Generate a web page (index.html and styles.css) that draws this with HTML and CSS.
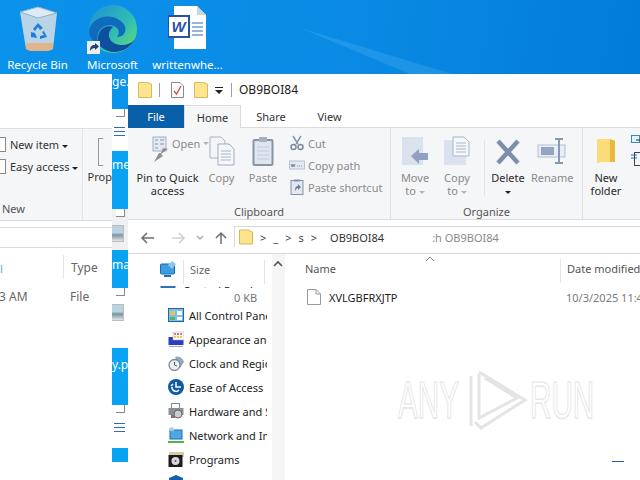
FILE: index.html
```html
<!DOCTYPE html>
<html lang="en">
<head>
  <meta charset="UTF-8" />
  <title>OB9BOI84</title>
  <link rel="stylesheet" href="styles.css">
</head>
<body>
  <div class="desktop">
    <svg class="ray" width="640" height="74" viewBox="0 0 640 74"><polygon points="300,28 320,34 452,74 410,74" fill="#3aa5ee" opacity="0.45"/></svg>

    <div class="desk-icons">
      <div class="desk-icon">
        <svg width="44" height="46" viewBox="0 0 44 46">
          <path d="M4 7 L22 2 L41 8 L37 44 Q22 50 10 44 Z" fill="#b9d4e6"/>
          <path d="M4 7 L22 2 L41 8 L22 13 Z" fill="#dcebf4" stroke="#8fb4cc"/>
          <path d="M10 38 L37 38 L37 44 Q22 50 10 44 Z" fill="#e2b48c"/>
          <path d="M17 24 l5 -6 l5 5 l-3 2 l-2 -3 l-3 4 Z M28 26 l3 6 l-7 2 v-3 l4 -1 l-2 -3 Z M15 27 l4 1 l2 5 l-6 -1 Z" fill="#1f7fd6"/>
        </svg>
        <span>Recycle Bin</span>
      </div>
      <div class="desk-icon">
        <svg width="52" height="50" viewBox="0 0 52 50">
          <defs>
            <linearGradient id="edgeTop" x1="0" y1="0" x2="1" y2="1"><stop offset="0" stop-color="#1b8fd8"/><stop offset="0.6" stop-color="#33bfb0"/><stop offset="1" stop-color="#6ce06a"/></linearGradient>
          </defs>
          <circle cx="26" cy="24" r="24" fill="url(#edgeTop)"/>
          <path d="M2 26 C4 12 24 6 36 18 C41 24 38 32 30 32 C36 24 26 18 18 21 C10 24 8 34 14 42 C7 38 2 33 2 26 Z" fill="#0f6cbd"/>
          <path d="M14 42 C6 30 16 18 26 22 C18 28 22 40 34 40 C40 40 45 38 48 34 C42 46 26 52 14 42 Z" fill="#0c4f9e"/>
          <rect x="0" y="36" width="13" height="13" fill="#e9eef2"/>
          <path d="M3 46 C3 41 5 40 8 40 V38 L12 41.500 L8 45 V43 C6 43 4 44 3 46 Z" fill="#1d3f6a"/>
        </svg>
        <span>Microsoft</span>
      </div>
      <div class="desk-icon">
        <svg width="40" height="46" viewBox="0 0 40 46">
          <path d="M6 1 H29 L38 10 V44 H6 Z" fill="#fff"/>
          <path d="M29 1 L38 10 H29 Z" fill="#c8d4e0"/>
          <path d="M24 18 H35 M24 22 H35 M24 26 H35 M24 30 H35" stroke="#2b6cc0"/>
          <rect x="0" y="11" width="21" height="21" fill="#fff" stroke="#2a4fa8" stroke-width="2"/>
          <text x="10.500" y="27" class="word-w">W</text>
        </svg>
        <span>writtenwhe...</span>
      </div>
    </div>

    <!-- window behind -->
    <div class="window back-win">
      <div class="back-top"></div>
      <div class="ribbon back-ribbon">
        <div class="back-new">
          <div class="small-row"><span class="stub"></span>New item <i class="caret"></i></div>
          <div class="small-row"><span class="stub"></span>Easy access <i class="caret"></i></div>
          <div class="back-label">New</div>
        </div>
        <div class="back-prop">
          <span class="prop-icon"></span>
          <span>Prop</span>
        </div>
      </div>
      <div class="back-addr"></div>
      <div class="back-head"><span class="back-teal">l</span><span class="back-type">Type</span></div>
      <div class="back-row"><span class="back-date">3 AM</span><span class="back-file">File</span></div>
    </div>

    <!-- slice of the desktop and other icons seen between the two windows -->
    <div class="strip">
      <div class="strip-blue s1">ge.</div>
      <div class="strip-white s2"><span class="fold"></span><span class="lines"></span></div>
      <div class="strip-blue s3">me</div>
      <div class="strip-white s4"><span class="fold"></span><span class="thumb"></span></div>
      <div class="strip-blue s5">man</div>
      <div class="strip-white s6"><span class="fold"></span><span class="thumb"></span></div>
      <div class="strip-blue s7">y.pr</div>
      <div class="strip-white s8"><span class="fold"></span><span class="lines"></span></div>
      <div class="strip-blue s9"></div>
    </div>

    <!-- front window -->
    <div class="window front-win">
      <div class="titlebar">
        <svg class="tb-folder" width="14" height="16" viewBox="0 0 14 16"><path d="M0.500 0.500 H9 L13.500 2 V15.500 H0.500 Z" fill="#fde48e" stroke="#d8b85a"/></svg>
        <i class="tb-sep"></i>
        <svg class="tb-check" width="13" height="16" viewBox="0 0 13 16"><path d="M0.500 0.500 H9 L12.500 4 V15.500 H0.500 Z" fill="#fff" stroke="#888"/><path d="M3 9 L5.500 12 L10 4" fill="none" stroke="#d4483a" stroke-width="1.300"/></svg>
        <svg class="tb-folder" width="14" height="16" viewBox="0 0 14 16"><path d="M0.500 0.500 H9 L13.500 2 V15.500 H0.500 Z" fill="#fde48e" stroke="#d8b85a"/></svg>
        <span class="tb-drop"></span>
        <i class="tb-sep tb-sep-end"></i>
        <span class="tb-title">OB9BOI84</span>
      </div>
      <div class="tabs">
        <div class="tab tab-file">File</div>
        <div class="tab tab-home">Home</div>
        <div class="tab tab-share">Share</div>
        <div class="tab tab-view">View</div>
      </div>
      <div class="ribbon front-ribbon">
        <div class="group group-clip">
          <div class="group-body">
            <div class="rbtn btn-pin">
              <div class="pin-top">
                <svg width="18" height="26" viewBox="0 0 18 26">
                  <rect x="1" y="1" width="13" height="14" fill="#e4e8f0" stroke="#a4aec0"/>
                  <path d="M3 4 h3 M8 4 h4 M3 8 h3 M8 8 h4 M3 12 h3" stroke="#8594ae"/>
                  <path d="M16 13 L9 18 L11 20 L2 26 L7 17 L9 17 L11 12 Z" fill="#8f8f8f"/>
                </svg>
                <span class="off open-lbl">Open</span><i class="caret off-caret"></i>
              </div>
              <div class="lbl">Pin to Quick<br>access</div>
            </div>
            <div class="rbtn btn-copy">
              <svg class="ico" width="26" height="30" viewBox="0 0 26 30">
                <path d="M1 1 H12 L16 5 V22 H1 Z" fill="#f3f5f9" stroke="#a9b4c6"/>
                <path d="M9 8 H20 L25 13 V29 H9 Z" fill="#f6f7fa" stroke="#a0acc0"/>
                <path d="M12 15 H22 M12 18 H22 M12 21 H22 M12 24 H22" stroke="#a9b6cb"/>
              </svg>
              <div class="lbl off">Copy</div>
            </div>
            <div class="rbtn btn-paste">
              <svg class="ico" width="22" height="30" viewBox="0 0 22 30">
                <rect x="1.500" y="4" width="19" height="25" rx="1" fill="#dfe5ee" stroke="#8794a8" stroke-width="2"/>
                <rect x="7" y="1" width="8" height="5" fill="#a6b0c0"/>
                <path d="M5 11 H17 M5 15 H17 M5 19 H17 M5 23 H17" stroke="#c3ccd9"/>
              </svg>
              <div class="lbl off">Paste</div>
            </div>
            <div class="small-col">
              <div class="small-item off">
                <svg width="16" height="16" viewBox="0 0 16 16"><path d="M4 1 L9 9 M12 1 L7 9" stroke="#8b97ab" stroke-width="1.500"/><circle cx="4.500" cy="12" r="2.500" fill="none" stroke="#7d8aa0" stroke-width="1.500"/><circle cx="11.500" cy="12" r="2.500" fill="none" stroke="#7d8aa0" stroke-width="1.500"/></svg>
                Cut
              </div>
              <div class="small-item off">
                <svg width="16" height="16" viewBox="0 0 16 16"><rect x="0.500" y="4" width="15" height="8" fill="#e3e8f2" stroke="#b7c1d2"/><path d="M2 7 l1 3 l1 -3 l1 3 l1 -3 M8 9 h1 M10 9 h1 M12 9 h1" stroke="#7f8ea8" fill="none"/></svg>
                Copy path
              </div>
              <div class="small-item off">
                <svg width="16" height="16" viewBox="0 0 16 16"><rect x="2" y="1.500" width="12" height="14" fill="#e3e8f0" stroke="#8491a6"/><rect x="5" y="0.500" width="6" height="2" fill="#8491a6"/><path d="M6 12 C6 8 7 7 9 7 V5 L12 8 L9 11 V9 C8 9 7 10 6 12 Z" fill="#6e7e98"/></svg>
                Paste shortcut
              </div>
            </div>
          </div>
          <div class="group-label">Clipboard</div>
        </div>
        <div class="group group-org">
          <div class="group-body">
            <div class="rbtn btn-move">
              <svg class="ico" width="28" height="30" viewBox="0 0 28 30">
                <rect x="1" y="1" width="21" height="28" fill="#dbe2ef"/>
                <path d="M10 20 L18 13 V17 H27 V24 H18 V28 Z" fill="#8fa1bf"/>
              </svg>
              <div class="lbl off">Move<br>to <i class="caret off-caret"></i></div>
            </div>
            <div class="rbtn btn-copyto">
              <svg class="ico" width="28" height="30" viewBox="0 0 28 30">
                <rect x="1" y="4" width="22" height="25" fill="#dbe2ef"/>
                <path d="M10 1 H21 L26 6 V20 H10 Z" fill="#f6f7fa" stroke="#a9b4c6"/>
                <path d="M13 7 H23 M13 10 H23 M13 13 H23 M13 16 H23" stroke="#a9b6cb"/>
              </svg>
              <div class="lbl off">Copy<br>to <i class="caret off-caret"></i></div>
            </div>
            <i class="inner-sep"></i>
            <div class="rbtn btn-delete">
              <svg class="ico" width="26" height="30" viewBox="0 0 26 30">
                <path d="M3 5 L23 27 M23 5 L3 27" stroke="#7f8fab" stroke-width="4.500"/>
              </svg>
              <div class="lbl">Delete<br><i class="caret"></i></div>
            </div>
            <div class="rbtn btn-rename">
              <svg class="ico" width="30" height="30" viewBox="0 0 30 30">
                <rect x="1" y="9" width="27" height="12" fill="#e9eef6" stroke="#b2bfd4"/>
                <rect x="4" y="11" width="13" height="8" fill="#94a5c2"/>
                <path d="M18 3 H26 M22 3 V27 M18 27 H26" stroke="#8898b4" stroke-width="2"/>
              </svg>
              <div class="lbl off">Rename</div>
            </div>
          </div>
          <div class="group-label">Organize</div>
        </div>
        <div class="group group-new">
          <div class="group-body">
            <div class="rbtn btn-folder">
              <svg class="ico" width="20" height="30" viewBox="0 0 20 30">
                <path d="M1 3 H13 L19 5 V26 H4 L1 28 Z" fill="#fbdc78"/>
                <path d="M14 3 L19 5 V26 H14 Z" fill="#e8b93e"/>
              </svg>
              <div class="lbl">New<br>folder</div>
            </div>
            <div class="new-side">
              <svg width="12" height="14" viewBox="0 0 12 14"><rect x="0.500" y="0.500" width="8" height="7" fill="#e8f1fa" stroke="#3c85c6"/><path d="M5 5 H11 V13" fill="none" stroke="#333"/></svg>
              <svg width="12" height="14" viewBox="0 0 12 14"><path d="M0 3 H6 M0 6 H6" stroke="#1c6fb8"/><rect x="3.500" y="0.500" width="8" height="13" fill="none" stroke="#444"/></svg>
            </div>
          </div>
        </div>
      </div>

      <div class="addressbar">
        <div class="nav-btns">
          <svg class="nav-back" width="16" height="14" viewBox="0 0 16 14"><path d="M14 7 H2 M7 2 L2 7 L7 12" fill="none" stroke="#6d6d6d" stroke-width="1.500"/></svg>
          <svg width="16" height="14" viewBox="0 0 16 14"><path d="M2 7 H14 M9 2 L14 7 L9 12" fill="none" stroke="#cfcfcf" stroke-width="1.500"/></svg>
          <svg width="10" height="14" viewBox="0 0 10 14"><path d="M2 5 L5 8 L8 5" fill="none" stroke="#a5a5a5" stroke-width="1.300"/></svg>
          <svg width="14" height="14" viewBox="0 0 14 14"><path d="M7 13 V2 M2 7 L7 2 L12 7" fill="none" stroke="#6d6d6d" stroke-width="1.500"/></svg>
        </div>
        <div class="addr-box">
          <svg width="14" height="16" viewBox="0 0 14 16"><path d="M0.500 1 H9 L13.500 3 V15 H0.500 Z" fill="#fde48e" stroke="#d8b85a"/></svg>
          <span class="crumb">&gt;</span><span class="crumb">_</span><span class="crumb">&gt;</span><span class="crumb">s</span><span class="crumb">&gt;</span>
          <span class="crumb-last">OB9BOI84</span>
          <span class="addr-ghost">:h OB9BOI84</span>
        </div>
      </div>

      <div class="browser">
        <div class="navpane">
          <div class="nav-head">
            <svg class="nav-monitor" width="17" height="18" viewBox="0 0 17 18"><rect x="0.500" y="4" width="14" height="10" rx="1" fill="#3d9be0" stroke="#1b6db5"/><path d="M8 5 L12 1 L16 4 L12 9 Z" fill="#8fc6ee"/><path d="M4 16 H11" stroke="#1b6db5" stroke-width="2"/></svg>
            <span class="head-sep"></span>
            <span class="size-lbl">Size</span>
            <span class="head-sep sep-end"></span>
          </div>
          <div class="nav-cut">
            <svg width="16" height="16" viewBox="0 0 16 16"><rect x="0.500" y="0" width="15" height="12" fill="#2f74b8"/></svg>
            <span>Control Panel</span>
          </div>
          <div class="nav-list">
            <div class="size-row">0 KB</div>
            <div class="nav-item">
              <svg width="16" height="16" viewBox="0 0 16 16"><rect x="0.500" y="1.500" width="15" height="13" fill="#7cc0ec" stroke="#1a66ac"/><rect x="2" y="4" width="5" height="4" fill="#e9c253"/><rect x="9" y="4" width="5" height="4" fill="#fff"/><rect x="2" y="10" width="5" height="3" fill="#62b05a"/><rect x="9" y="10" width="5" height="3" fill="#fff"/></svg>
              <span>All Control Panel Items</span>
            </div>
            <div class="nav-item">
              <svg width="16" height="16" viewBox="0 0 16 16"><rect x="0.500" y="6" width="15" height="8" fill="#2b3fc0"/><rect x="5" y="1" width="11" height="8" fill="#fff" stroke="#aaa" stroke-width="0.500"/><path d="M6 3 h2 M9 3 h2 M12 3 h2" stroke="#d64a3a" stroke-width="1.500"/><path d="M6 6 h2 M9 6 h2 M12 6 h2" stroke="#e8b53c" stroke-width="1.500"/><path d="M1 15.500 H15" stroke="#9aa8d0"/></svg>
              <span>Appearance and Personalization</span>
            </div>
            <div class="nav-item">
              <svg width="16" height="16" viewBox="0 0 16 16"><path d="M7 2 A7 7 0 0 1 16 7 L12 13 Z" fill="#8fa9bf"/><circle cx="6.500" cy="10" r="5.500" fill="#eef0f2" stroke="#7b8791" stroke-width="1.300"/><path d="M6.500 7 V10 L9 11" stroke="#555" fill="none"/></svg>
              <span>Clock and Region</span>
            </div>
            <div class="nav-item">
              <svg width="16" height="16" viewBox="0 0 16 16"><circle cx="8" cy="8" r="8" fill="#0f5aa6"/><path d="M8 3 V8 H13 M4 8 A4 4 0 0 0 11 11 M5 5 L3 7" fill="none" stroke="#fff" stroke-width="1.500"/></svg>
              <span>Ease of Access</span>
            </div>
            <div class="nav-item">
              <svg width="16" height="16" viewBox="0 0 16 16"><rect x="3.500" y="0.500" width="8" height="5" fill="#fff" stroke="#888"/><rect x="0.500" y="5" width="15" height="7" fill="#8a8f95"/><circle cx="10" cy="11" r="4" fill="#c9cdd1" stroke="#666"/><rect x="3" y="12" width="4" height="3" fill="#777"/></svg>
              <span>Hardware and Sound</span>
            </div>
            <div class="nav-item">
              <svg width="16" height="16" viewBox="0 0 16 16"><rect x="2" y="3" width="12" height="9" fill="#4fa8e4" stroke="#1b6db5"/><path d="M1 1 L5 0 L6 4 L2 4 Z" fill="#9fd0f0"/><path d="M0 15 H16" stroke="#5ab04c" stroke-width="2"/></svg>
              <span>Network and Internet</span>
            </div>
            <div class="nav-item">
              <svg width="16" height="16" viewBox="0 0 16 16"><rect x="1" y="1" width="15" height="5" fill="#d9c9a8"/><rect x="0.500" y="4" width="14" height="12" fill="#1c1c1c"/><circle cx="7.500" cy="10" r="4" fill="#d8d8d8"/><circle cx="7.500" cy="10" r="1" fill="#555"/></svg>
              <span>Programs</span>
            </div>
            <div class="nav-item">
              <svg width="16" height="16" viewBox="0 0 16 16"><path d="M8 0 L15 3 V9 C15 13 11 15 8 16 C5 15 1 13 1 9 V3 Z" fill="#1460a8"/></svg>
              <span>System and Security</span>
            </div>
          </div>
          <div class="nav-scroll"><svg width="12" height="8" viewBox="0 0 12 8"><path d="M2 6 L6 2 L10 6" fill="none" stroke="#555" stroke-width="1.600"/></svg></div>
        </div>

        <div class="files">
          <svg class="sort-caret" width="10" height="6" viewBox="0 0 10 6"><path d="M1 5 L5 1 L9 5" fill="none" stroke="#8a8a8a"/></svg>
          <div class="files-head">
            <span class="col-name">Name</span>
            <span class="head-sep"></span>
            <span class="col-date">Date modified</span>
          </div>
          <div class="file-row">
            <svg class="file-ico" width="14" height="16" viewBox="0 0 14 16"><path d="M0.500 0.500 H9 L13.500 5 V15.500 H0.500 Z" fill="#fff" stroke="#9a9a9a"/><path d="M9 0.500 V5 H13.500" fill="none" stroke="#9a9a9a"/></svg>
            <span class="col-name file-name">XVLGBFRXJTP</span>
            <span class="col-date">10/3/2025 11:43 AM</span>
          </div>
          <div class="watermark">
            <span class="wm-text">ANY</span>
            <svg width="62" height="64" viewBox="0 0 62 64">
              <path d="M4 8 L4 58 M12 6 L12 50 L50 30 L18 10 M12 4 L58 32 L14 60 L8 54" fill="none" stroke="#e4e4e4" stroke-width="3"/>
            </svg>
            <span class="wm-text">RUN</span>
          </div>
          <i class="corner-mark"></i>
        </div>
      </div>
    </div>
  </div>
</body>
</html>
```

FILE: styles.css
```css
* { box-sizing: border-box; margin: 0; padding: 0; }

html, body { width: 640px; height: 480px; overflow: hidden; }

body {
  font-family: "Noto Sans", "Open Sans", sans-serif;
  font-size: 11px;
  color: #222;
}

.desktop {
  position: relative;
  width: 640px;
  height: 480px;
  overflow: hidden;
  background: linear-gradient(100deg, #0b92ea 0%, #0a8ae4 50%, #0078d6 100%);
}

.ray { position: absolute; left: 0; top: 0; }

/* desktop icons */
.desk-icons {
  position: absolute;
  left: 0;
  top: 5px;
  display: flex;
}

.desk-icon {
  width: 75px;
  height: 68px;
  display: flex;
  flex-direction: column;
  align-items: center;
  justify-content: space-between;
  color: #fff;
  font-size: 11.500px;
  white-space: nowrap;
}
.desk-icon span { line-height: 16px; }
.desk-icon svg { display: block; }
.word-w { font: italic bold 15px "Liberation Sans", sans-serif; fill: #2a4fa8; text-anchor: middle; }

/* windows */
.window { position: absolute; background: #fff; overflow: hidden; }

.ribbon { background: #f5f6f7; border-bottom: 1px solid #d9dadb; }

.caret {
  display: inline-block;
  width: 0; height: 0;
  border-left: 3px solid transparent;
  border-right: 3px solid transparent;
  border-top: 3px solid #222;
  vertical-align: middle;
}
.off-caret { border-top-color: #b5b5b5; }
.off { color: #8a8a8a; }

/* back window */
.back-win { left: 0; top: 74px; width: 112px; height: 406px; }
.back-top { height: 55px; border-bottom: 1px solid #dcdcdc; }
.back-ribbon { height: 92px; display: flex; color: #333; }
.back-new {
  width: 88px;
  border-right: 1px solid #e2e3e4;
  padding-top: 5px;
}
.small-row { height: 22px; line-height: 22px; padding-left: 10px; position: relative; white-space: nowrap; }
.stub {
  position: absolute;
  left: -4px; top: 3px;
  width: 10px; height: 15px;
  border: 1px solid #888;
  background: #fff;
}
.back-label { margin-top: 23px; padding-left: 2px; color: #555; }
.back-prop {
  padding: 9px 0 0 5px;
  display: flex;
  flex-direction: column;
  gap: 3px;
  color: #333;
}
.prop-icon { display: block; width: 5px; height: 28px; margin-left: 10px; border: 1px solid #999; border-right: 0; }
.back-addr {
  height: 27px;
  background: linear-gradient(#dcdcdc, #dcdcdc) 0 6px / 100% 1px no-repeat;
  border-bottom: 1px solid #d9d9d9;
}
.back-head { height: 38px; position: relative; }
.back-teal { position: absolute; left: 0; top: 9px; line-height: 24px; color: #4db5c8; }
.back-type {
  position: absolute;
  left: 63px; top: 7px;
  padding-left: 7px;
  height: 24px;
  line-height: 26px;
  border-left: 1px solid #e5e5e5;
  color: #666;
  font-size: 12px;
}
.back-row { position: relative; height: 22px; line-height: 22px; color: #666; font-size: 12px; }
.back-date { position: absolute; left: -1px; }
.back-file { position: absolute; left: 70px; }

/* slice between windows */
.strip {
  position: absolute;
  left: 112px; top: 74px;
  width: 16px; height: 406px;
  background: #fff;
  overflow: hidden;
  color: #fff;
  font-size: 12px;
}
.strip > div { position: relative; overflow: hidden; white-space: nowrap; }
.strip-blue { background: #0aa2f2; }
.strip-white { background: #fff; }
.s1 { height: 35px; line-height: 16px; background: #0a94ec; }
.s2 { height: 42px; }
.s3 { height: 58px; line-height: 28px; }
.s4 { height: 41px; background: #f0f0f0; }
.s5 { height: 38px; line-height: 30px; }
.s6 { height: 60px; }
.s7 { height: 57px; line-height: 34px; }
.s8 { height: 43px; }
.s9 { height: 14px; }
.fold {
  position: absolute;
  right: 3px; top: 0;
  width: 9px; height: 8px;
  background: #fff;
  border-right: 1px solid #8a8a8a;
  border-bottom: 1px solid #8a8a8a;
}
.lines {
  position: absolute;
  left: 2px; top: 18px;
  width: 11px; height: 9px;
  border-top: 1px solid #2b6cc0;
  border-bottom: 1px solid #2b6cc0;
  background: linear-gradient(#2b6cc0, #2b6cc0) 0 3px / 100% 1px no-repeat;
}
.thumb {
  position: absolute;
  left: 0; top: 16px;
  width: 12px; height: 17px;
  background: linear-gradient(#b9d3e3 45%, #7d939a 60%, #dfe8ea);
  border: 1px solid #bcbcbc;
  border-left: 0;
}

/* front window */
.front-win { left: 128px; top: 74px; width: 512px; height: 406px; }

.titlebar {
  height: 31px;
  display: flex;
  align-items: center;
  padding-left: 10px;
}
.titlebar svg { flex: none; }
.tb-sep { width: 1px; height: 14px; background: #a0a0a0; margin: 0 11px 0 7px; }
.tb-sep-end { margin: 0 7px 0 8px; }
.tb-check { margin-right: 10px; }
.tb-drop {
  width: 8px; height: 7px;
  margin: 2px 0 0 7px;
  border-top: 1px solid #222;
  position: relative;
}
.tb-drop::after {
  content: "";
  position: absolute;
  left: 0; top: 2px;
  border-left: 4px solid transparent;
  border-right: 4px solid transparent;
  border-top: 4px solid #222;
}
.tb-title { font-size: 12px; color: #222; }

.tabs { height: 23px; display: flex; font-size: 11px; position: relative; z-index: 1; }
.tab { line-height: 23px; text-align: center; color: #333; }
.tab-file { width: 56px; background: #0a5fa9; color: #fff; }
.tab-home {
  width: 57px;
  background: #f5f6f7;
  border: 1px solid #dadbdc;
  border-bottom: 0;
}
.tab-share { width: 60px; }
.tab-view { width: 57px; }

.front-ribbon { height: 93px; display: flex; border-top: 1px solid #dadbdc; margin-top: -1px; overflow: hidden; }
.group { display: flex; flex-direction: column; flex: none; border-right: 1px solid #e0e1e2; }
.group-clip { width: 263px; }
.group-org { width: 192px; }
.group-new { width: 57px; border-right: 0; }
.group-body { flex: 1; display: flex; align-items: flex-start; }
.group-label { height: 15px; line-height: 15px; text-align: center; color: #555; }

.rbtn { text-align: center; padding-top: 8px; flex: none; }
.ico { display: block; margin: 0 auto 5px; }
.lbl { line-height: 13px; white-space: nowrap; color: #2a2a2a; }
.lbl.off { color: #8a8a8a; }

.btn-pin { width: 71px; margin-left: 4px; }
.pin-top {
  height: 35px;
  display: flex;
  align-items: flex-start;
  padding-left: 20px;
}
.pin-top svg { flex: none; margin-right: -1px; }
.open-lbl { margin: 0 3px; line-height: 16px; }
.pin-top .caret { margin-top: 6px; }
.btn-copy { width: 37px; }
.btn-paste { width: 42px; margin-left: 2px; }
.small-col { margin-left: 5px; padding-top: 7px; display: flex; flex-direction: column; gap: 6px; }
.small-item { display: flex; align-items: center; gap: 3px; height: 16px; white-space: nowrap; }

.group-org .group-body { padding-left: 3px; }
.btn-move, .btn-copyto, .btn-rename { width: 42px; }
.inner-sep { width: 1px; height: 56px; background: #e2e3e4; margin: 12px 0 0 6px; flex: none; }
.btn-delete { width: 46px; }

.btn-folder { width: 46px; }
.new-side { display: flex; flex-direction: column; gap: 3px; padding: 7px 0 0 2px; flex: none; }

.addressbar {
  height: 28px;
  margin-top: 6px;
  display: flex;
  align-items: flex-start;
  border-bottom: 1px solid #d9d9d9;
}
.nav-btns { width: 106px; height: 22px; display: flex; align-items: center; gap: 9px; padding: 1px 0 0 12px; flex: none; }
.nav-back { margin-right: 5px; }
.addr-box {
  flex: 1;
  height: 21px;
  padding-left: 4px;
  display: flex;
  align-items: center;
  border-left: 1px solid #d9d9d9;
  border-top: 1px solid #d9d9d9;
  white-space: nowrap;
  color: #333;
}
.crumb { margin-left: 7px; color: #444; }
.crumb-last { margin-left: 13px; }
.addr-ghost { margin-left: 48px; color: #8a8a8a; }

.browser { display: flex; height: 232px; }

.navpane { width: 157px; position: relative; flex: none; overflow: hidden; }
.nav-head { height: 32px; display: flex; align-items: flex-start; padding: 6px 0 0 32px; }
.head-sep { width: 1px; height: 24px; background: #e5e5e5; margin-left: 6px; flex: none; }
.size-lbl { margin-left: 6px; color: #666; line-height: 20px; width: 74px; }
.sep-end { margin-left: 0; }
.nav-cut {
  position: absolute;
  left: 32px; top: 32px;
  display: flex;
  gap: 7px;
  line-height: 10px;
  color: #222;
  height: 3px;
  overflow: hidden;
  white-space: nowrap;
}
.nav-cut svg { flex: none; }
.nav-list { position: absolute; left: 0; top: 34px; width: 139px; height: 198px; background: #fff; overflow: hidden; }
.size-row { height: 15px; line-height: 20px; padding-left: 106px; color: #777; white-space: nowrap; }
.nav-item { height: 24px; display: flex; align-items: center; gap: 5px; padding-left: 40px; white-space: nowrap; color: #222; }
.nav-item svg { flex: none; }
.nav-scroll {
  position: absolute;
  right: 0; top: 0;
  width: 13px; height: 232px;
  background: #f5f5f5;
  padding-top: 6px;
}
.nav-scroll svg { display: block; }

.files { flex: 1; position: relative; overflow: hidden; }
.sort-caret { position: absolute; left: 140px; top: 2px; }
.files-head { height: 32px; display: flex; align-items: flex-start; padding: 5px 0 0 20px; color: #555; white-space: nowrap; }
.files-head .col-name { width: 255px; line-height: 20px; flex: none; }
.files-head .head-sep { margin-left: 0; }
.files-head .col-date { margin-left: 6px; line-height: 20px; }
.file-row { display: flex; align-items: center; height: 22px; padding-left: 22px; white-space: nowrap; }
.file-row .file-ico { flex: none; margin-right: 8px; }
.file-name { width: 237px; flex: none; color: #222; }
.file-row .col-date { color: #7a7a7a; }

.watermark {
  position: absolute;
  left: 113px; top: 114px;
  display: flex;
  align-items: center;
  gap: 1px;
}
.wm-text {
  font-family: "Liberation Sans", sans-serif;
  font-size: 52px;
  line-height: 52px;
  color: #fff;
  -webkit-text-stroke: 1px #e2e2e2;
  text-shadow: 0 1px 2px #eee;
  display: inline-block;
  width: 68px;
  transform: scaleX(0.57);
  transform-origin: left center;
  white-space: nowrap;
}
.corner-mark { position: absolute; left: 327px; top: 207px; width: 12px; height: 1px; background: #1c5ea8; }
```
